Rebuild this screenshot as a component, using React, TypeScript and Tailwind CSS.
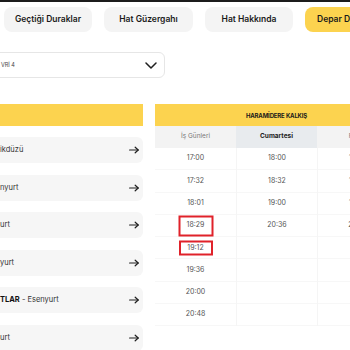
import React from "react"

const tabs = [
  { label: "Geçtiği Duraklar", w: "w-[88px]", active: false },
  { label: "Hat Güzergahı", w: "w-[89px]", active: false },
  { label: "Hat Hakkında", w: "w-[88px]", active: false },
  { label: "Depar Dönüş Saatleri", w: "w-[120px]", active: true },
]

const stops = [
  { bold: "", rest: "ikdüzü" },
  { bold: "", rest: "nyurt" },
  { bold: "", rest: "urt" },
  { bold: "", rest: "yurt" },
  { bold: "TLAR", rest: " - Esenyurt" },
  { bold: "", rest: "urt" },
]

const weekdays = ["17:00", "17:32", "18:01", "18:29", "19:12", "19:36", "20:00", "20:48"]
const saturday = ["18:00", "18:32", "19:00", "20:36", "", "", "", ""]
const sunday = ["18:00", "18:32", "19:00", "20:36", "", "", "", ""]

// highlighted departures (red frames drawn over the cells)
const marked: Record<string, string> = {
  "18:29": "w-[35px] h-[21px]",
  "19:12": "w-[34px] h-[15px]",
}

function Arrow() {
  return (
    <svg width="10" height="8" viewBox="0 0 10 8" fill="none" stroke="#1f1f1f" strokeWidth="1.2" strokeLinecap="round" strokeLinejoin="round">
      <path d="M0.6 4h8.6" />
      <path d="M6.2 1.2L9.2 4L6.2 6.8" />
    </svg>
  )
}

function Chevron() {
  return (
    <svg width="12" height="7" viewBox="0 0 12 7" fill="none" stroke="#1f1f1f" strokeWidth="1.5" strokeLinecap="round" strokeLinejoin="round">
      <path d="M1 1l5 5 5-5" />
    </svg>
  )
}

export default function App() {
  return (
    <div className="w-[350px] h-[350px] overflow-hidden bg-white font-['Inter','Noto_Sans',sans-serif] text-[#222]">
      <div className="h-[2px] bg-[#1c1c1c]" />

      <div className="flex gap-3 pl-1 pt-[5px] whitespace-nowrap">
        {tabs.map((t) => (
          <div
            key={t.label}
            className={`${t.w} shrink-0 h-[25px] rounded-lg flex items-center text-[8.5px] font-semibold text-[#1a1a1a] ${
              t.active ? "bg-[#fcd34f] pl-[12px]" : "bg-[#f4f4f4] justify-center"
            }`}
          >
            {t.label}
          </div>
        ))}
      </div>

      <div className="mt-5 -ml-[40px] w-[205px] h-[26px] rounded-md border border-[#e6e6e6] flex items-center justify-between pl-[40px] pr-[7px]">
        <span className="text-[5.5px] text-[#444]">VRİ 4</span>
        <Chevron />
      </div>

      <div className="mt-[26px] flex gap-3">
        {/* stops */}
        <div className="-ml-[20px] w-[163px] shrink-0">
          <div className="h-[22px] bg-[#fcd34f]" />
          <div className="mt-[11px] flex flex-col gap-[11.5px]">
            {stops.map((s, i) => (
              <div key={i} className="h-[26px] rounded-md bg-[#f6f6f6] flex items-center justify-between pl-[20px] pr-[4px] text-[7.5px] text-[#333]">
                <span>
                  {s.bold && <b className="font-bold text-[#111]">{s.bold}</b>}
                  {s.rest}
                </span>
                <Arrow />
              </div>
            ))}
          </div>
        </div>

        {/* timetable */}
        <div className="w-[243px] shrink-0">
          <div className="h-[22px] bg-[#fcd34f] flex items-center justify-center text-[6px] font-bold tracking-tight text-[#1a1a1a]">
            HARAMİDERE KALKIŞ
          </div>
          <div className="grid grid-cols-3">
            <div className="h-[22px] bg-[#f3f3f3] flex items-center justify-center text-[6.5px] text-[#777]">İş Günleri</div>
            <div className="h-[22px] bg-[#e8ebee] flex items-center justify-center text-[6.5px] font-bold text-[#222]">Cumartesi</div>
            <div className="h-[22px] bg-[#f3f3f3] flex items-center justify-center text-[6.5px] text-[#777]">Pazar</div>
          </div>
          <div className="grid grid-cols-3">
            {[weekdays, saturday, sunday].map((col, ci) => (
              <div key={ci} className={`flex flex-col ${ci > 0 ? "border-l border-[#f5f5f5]" : ""}`}>
                {col.map((t, ri) => (
                  <div key={ri} className="relative h-[22.3px] flex items-center justify-center border-b border-[#f7f7f7] text-[7px] text-[#555]">
                    {t}
                    {ci === 0 && marked[t] && (
                      <span className={`absolute left-1/2 top-1/2 -translate-x-1/2 -translate-y-1/2 border-2 border-[#e0222a] ${marked[t]}`} />
                    )}
                  </div>
                ))}
              </div>
            ))}
          </div>
        </div>
      </div>
    </div>
  )
}
